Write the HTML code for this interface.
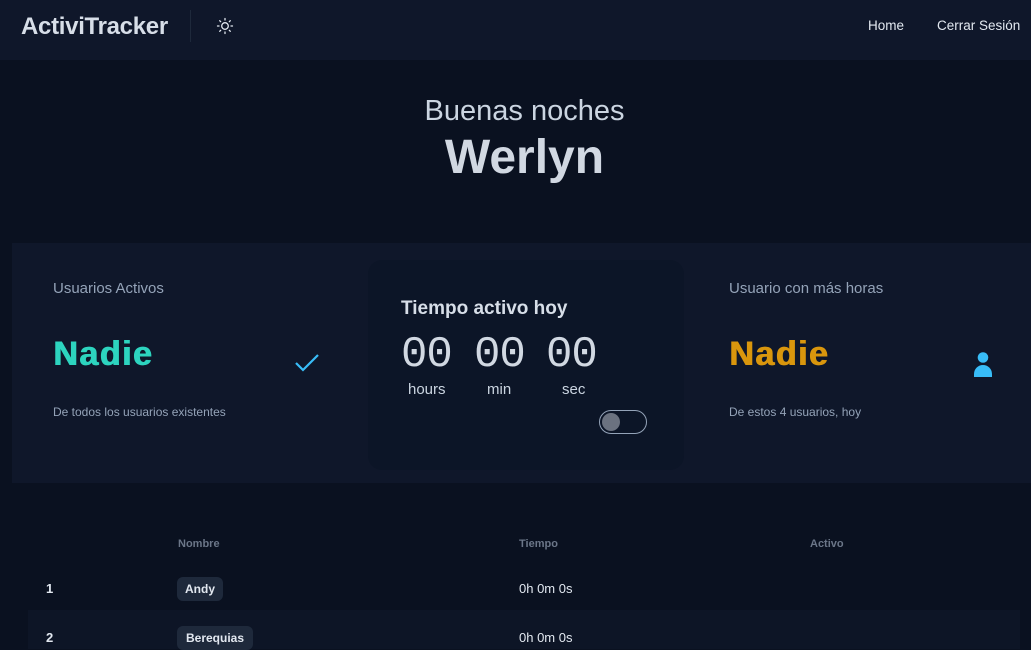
<!DOCTYPE html>
<html><head><meta charset="utf-8"><style>
*{margin:0;padding:0;box-sizing:border-box}
body{width:1031px;height:649px;overflow:hidden;background:#0a1120;font-family:"Liberation Sans",sans-serif;color:#cbd5e1;position:relative}
.hdr{position:absolute;left:0;top:0;width:1031px;height:60px;background:#0f172a}
.abs{position:absolute;white-space:nowrap}
.big{font-size:34px;font-weight:bold;letter-spacing:1.5px}
</style></head><body>
<div class="hdr"></div>
<div class="abs" style="left:21px;top:13px;font-size:24px;font-weight:bold;color:#d7dee8;letter-spacing:-0.3px">ActiviTracker</div>
<div class="abs" style="left:190px;top:10px;width:1px;height:32px;background:#1e293b"></div>
<svg class="abs" style="left:216px;top:17px" width="18" height="18" viewBox="0 0 18 18" fill="none" stroke="#e2e8f0" stroke-width="1.3" stroke-linecap="round"><circle cx="9" cy="9" r="3.3"/><path d="M9 1.5v1.5M9 15v1.5M1.5 9H3M15 9h1.5M3.7 3.7l1 1M13.3 13.3l1 1M3.7 14.3l1-1M13.3 4.7l1-1"/></svg>
<div class="abs" style="left:868px;top:18px;font-size:13.5px;color:#e2e8f0">Home</div>
<div class="abs" style="left:937px;top:18px;font-size:13.5px;color:#e2e8f0">Cerrar Sesión</div>

<div class="abs" style="left:18px;width:1013px;text-align:center;top:95px;font-size:29px;color:#cbd5e1">Buenas noches</div>
<div class="abs" style="left:18px;width:1013px;text-align:center;top:130px;font-size:48px;font-weight:bold;color:#d1d8e2">Werlyn</div>

<div class="abs" style="left:12px;top:243px;width:1019px;height:240px;background:#0f172a"></div>
<div class="abs" style="left:368px;top:260px;width:316px;height:210px;background:#0c1527;border-radius:14px"></div>

<div class="abs" style="left:53px;top:280px;font-size:15px;color:#94a3b8">Usuarios Activos</div>
<div class="abs big" style="left:53px;top:335px;color:#2dd4bf;text-shadow:1px 0 0 #2dd4bf">Nadie</div>
<svg class="abs" style="left:294px;top:353px" width="26" height="20" viewBox="0 0 26 20" fill="none" stroke="#38bdf8" stroke-width="2.2"><path d="M2 10l7 7L24 2"/></svg>
<div class="abs" style="left:53px;top:405px;font-size:12px;color:#94a3b8">De todos los usuarios existentes</div>

<div class="abs" style="left:401px;top:298px;font-size:19px;font-weight:bold;color:#d7dee8">Tiempo activo hoy</div>
<div class="abs" style="left:401px;top:330px;font-size:44px;font-family:'Liberation Mono',monospace;color:#d1d8e2;letter-spacing:-1px">00</div>
<div class="abs" style="left:474px;top:330px;font-size:44px;font-family:'Liberation Mono',monospace;color:#d1d8e2;letter-spacing:-1px">00</div>
<div class="abs" style="left:546px;top:330px;font-size:44px;font-family:'Liberation Mono',monospace;color:#d1d8e2;letter-spacing:-1px">00</div>
<div class="abs" style="left:408px;top:381px;font-size:15px;color:#cbd5e1">hours</div>
<div class="abs" style="left:487px;top:381px;font-size:15px;color:#cbd5e1">min</div>
<div class="abs" style="left:562px;top:381px;font-size:15px;color:#cbd5e1">sec</div>
<div class="abs" style="left:599px;top:410px;width:48px;height:24px;border:1.5px solid #94a3b8;border-radius:12px"></div>
<div class="abs" style="left:602px;top:413px;width:18px;height:18px;border-radius:50%;background:#6b7280"></div>

<div class="abs" style="left:729px;top:280px;font-size:15px;color:#94a3b8">Usuario con más horas</div>
<div class="abs big" style="left:729px;top:335px;color:#d9960d;text-shadow:1px 0 0 #d9960d">Nadie</div>
<svg class="abs" style="left:973px;top:351px" width="20" height="26" viewBox="0 0 20 26" fill="#38bdf8"><circle cx="10" cy="6.5" r="5.3"/><path d="M1 26v-3a9 9 0 0 1 18 0v3z"/></svg>
<div class="abs" style="left:729px;top:405px;font-size:12px;color:#94a3b8">De estos 4 usuarios, hoy</div>

<div class="abs" style="left:178px;top:538px;font-size:11px;font-weight:bold;color:#6b7688">Nombre</div>
<div class="abs" style="left:519px;top:538px;font-size:11px;font-weight:bold;color:#6b7688">Tiempo</div>
<div class="abs" style="left:810px;top:538px;font-size:11px;font-weight:bold;color:#6b7688">Activo</div>

<div class="abs" style="left:46px;top:581px;font-size:13px;font-weight:bold;color:#e2e8f0">1</div>
<div class="abs" style="left:177px;top:577px;height:24px;padding:0 8px;line-height:24px;background:#1e293b;border-radius:6px;font-size:12px;font-weight:bold;color:#e2e8f0">Andy</div>
<div class="abs" style="left:519px;top:581px;font-size:13px;color:#e2e8f0">0h 0m 0s</div>

<div class="abs" style="left:28px;top:610px;width:992px;height:39px;background:#0d1526"></div>
<div class="abs" style="left:46px;top:630px;font-size:13px;font-weight:bold;color:#e2e8f0">2</div>
<div class="abs" style="left:177px;top:626px;height:24px;padding:0 9px;line-height:24px;background:#1e293b;border-radius:6px;font-size:12px;font-weight:bold;color:#e2e8f0">Berequias</div>
<div class="abs" style="left:519px;top:630px;font-size:13px;color:#e2e8f0">0h 0m 0s</div>
</body></html>
